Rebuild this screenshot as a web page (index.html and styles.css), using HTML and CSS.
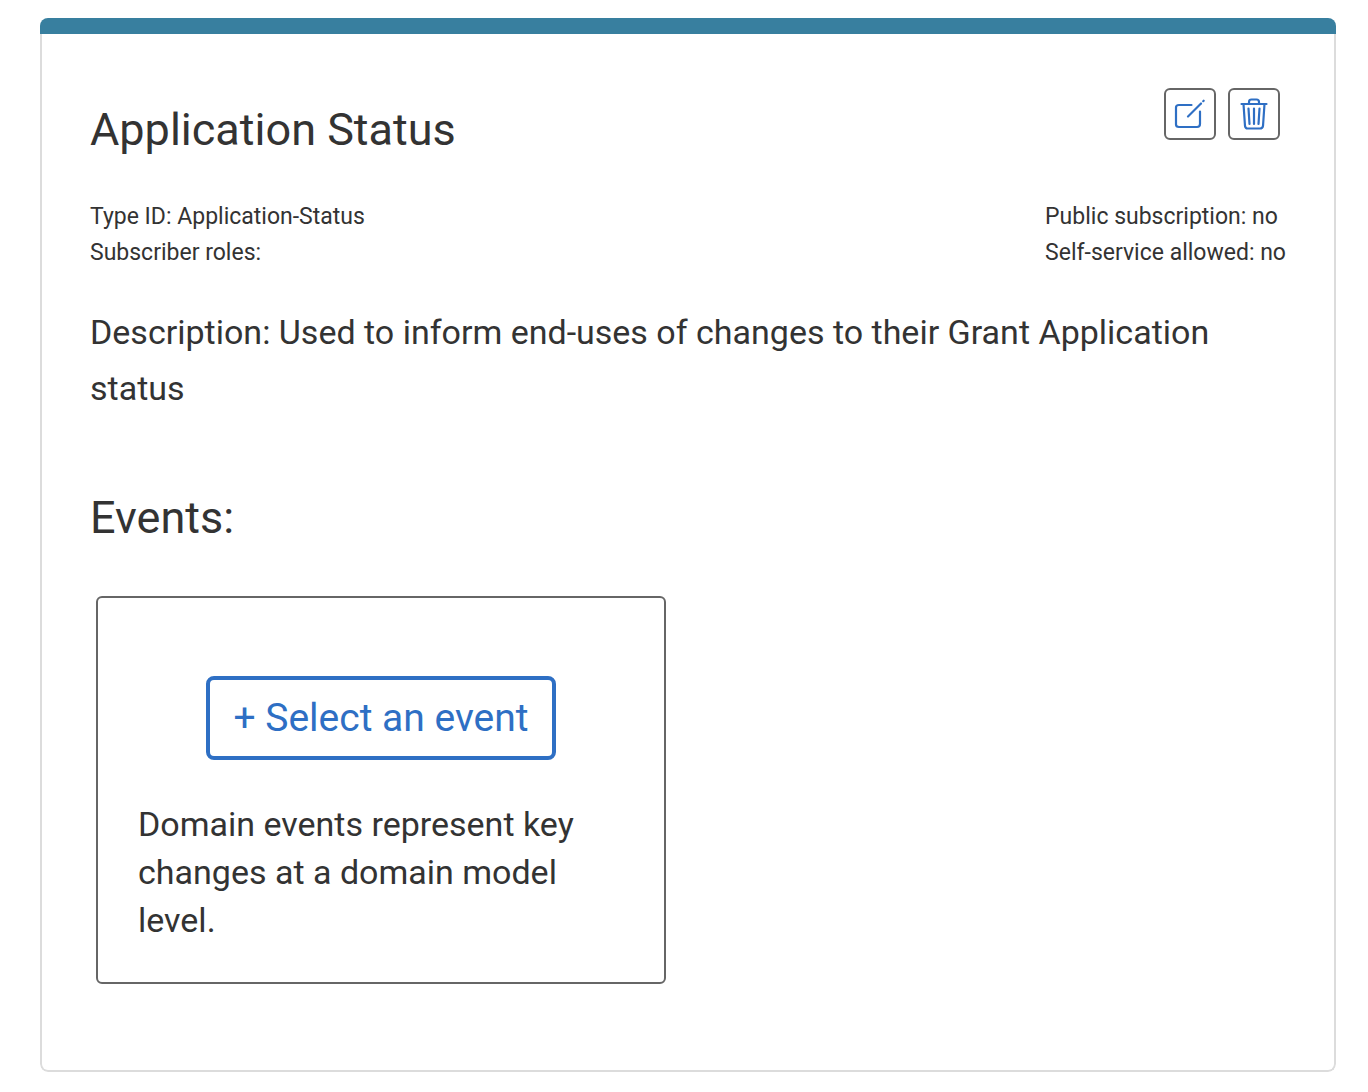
FILE: index.html
```html
<!DOCTYPE html>
<html lang="en">
<head>
<meta charset="utf-8">
<meta name="viewport" content="width=device-width, initial-scale=1">
<title>Application Status</title>
<link rel="stylesheet" href="styles.css">
</head>
<body>
<main class="card">
  <div class="card-body">
    <header class="card-header">
      <h1 class="title">Application Status</h1>
      <div class="actions">
        <button class="icon-button" type="button" aria-label="Edit">
          <svg class="icon" viewBox="0 0 32 32" aria-hidden="true">
            <path d="M17.500 7H5Q2 7 2 9.500V26.500Q2 29 5 29H23Q26 29 26 26V13.500" />
            <path d="M14 18.500L27 5.500" />
            <path d="M29.200 3.200L29.700 2.700" />
          </svg>
        </button>
        <button class="icon-button" type="button" aria-label="Delete">
          <svg class="icon" viewBox="0 0 32 32" aria-hidden="true">
            <path d="M3.500 6H28.500M11 6V4Q11 1.500 13.500 1.500H18.500Q21 1.500 21 4V6" />
            <path d="M5.500 6L7 28Q7.500 30.500 9.500 30.500H22Q24.500 30.500 25 28L26.500 6" />
            <path d="M10.500 10.500L11.500 26M16 10.500V26M21.500 10.500L20.500 26" />
          </svg>
        </button>
      </div>
    </header>
    <div class="meta">
      <div class="meta-column">
        <p>Type ID: Application-Status</p>
        <p>Subscriber roles:</p>
      </div>
      <div class="meta-column">
        <p>Public subscription: no</p>
        <p>Self-service allowed: no</p>
      </div>
    </div>
    <p class="description">Description: Used to inform end-uses of changes to their Grant Application status</p>
    <h2 class="title events-title">Events:</h2>
    <section class="event-box">
      <button class="select-button" type="button">+ Select an event</button>
      <p class="event-help">Domain events represent key changes at a domain model level.</p>
    </section>
  </div>
</main>
</body>
</html>
```
FILE: styles.css
```css
* {
  box-sizing: border-box;
}

body {
  margin: 0;
  padding: 18px 32px 20px 40px;
  background: #fff;
  color: #333;
  font-family: Roboto, "Liberation Sans", sans-serif;
}

h1, h2, p {
  margin: 0;
}

.card {
  overflow: hidden;
  border-radius: 8px;
  border-top: 16px solid #387f9f;
}

.card-body {
  padding: 54px 48px 86px;
  border: 2px solid #dcdcdc;
  border-top: 0;
  border-radius: 0 0 8px 8px;
}

.card-header {
  display: flex;
  justify-content: space-between;
  align-items: flex-start;
}

.title {
  padding-top: 14px;
  font-size: 45px;
  font-weight: 400;
  line-height: 56px;
}

.actions {
  display: flex;
  gap: 12px;
  padding-right: 6px;
}

.icon-button {
  display: grid;
  place-items: center;
  width: 52px;
  height: 52px;
  padding: 0;
  border: 2px solid #666;
  border-radius: 6px;
  background: #fff;
  color: #2e6fc4;
}

.icon {
  width: 32px;
  height: 32px;
  fill: none;
  stroke: currentColor;
  stroke-width: 2.2;
  stroke-linecap: round;
  stroke-linejoin: round;
}

.meta {
  display: flex;
  justify-content: space-between;
  gap: 24px;
  margin-top: 41px;
  font-size: 23px;
  line-height: 36px;
}

.description {
  margin-top: 33px;
  font-size: 34px;
  line-height: 56px;
}

.events-title {
  margin-top: 60px;
}

.event-box {
  display: flex;
  flex-direction: column;
  gap: 40px;
  width: 570px;
  max-width: 100%;
  margin: 50px 6px 0;
  padding: 78px 40px 38px;
  border: 2px solid #666;
  border-radius: 6px;
}

.select-button {
  align-self: center;
  padding: 14px 23px;
  border: 4px solid #2e6fc4;
  border-radius: 8px;
  background: #fff;
  color: #2e6fc4;
  font: inherit;
  font-size: 39px;
  line-height: 48px;
}

.event-help {
  font-size: 34px;
  line-height: 48px;
}
```
